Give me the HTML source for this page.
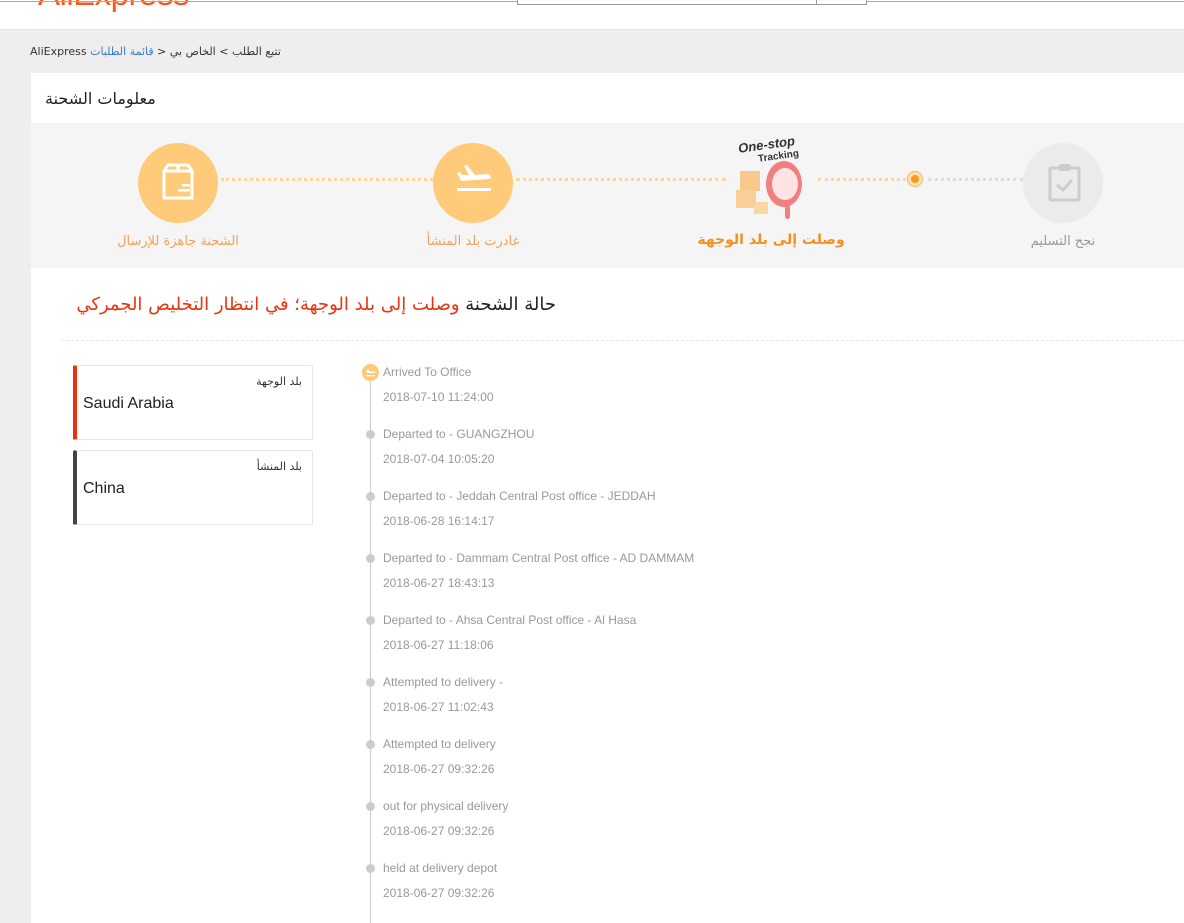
<!DOCTYPE html>
<html><head><meta charset="utf-8"><style>
*{margin:0;padding:0;box-sizing:border-box}
body{width:1184px;height:923px;overflow:hidden;background:#eee;font-family:"Liberation Sans","DejaVu Sans",sans-serif;position:relative}
.abs{position:absolute}
.ar{font-family:"DejaVu Sans","Liberation Sans",sans-serif}
#hdr{left:0;top:0;width:1184px;height:30px;background:#fff;border-bottom:1px solid #e3e3e3;overflow:hidden}
#panel{left:31px;top:73px;width:1153px;height:850px;background:#fff}
.step{position:absolute;width:80px;height:80px;border-radius:50%;background:#ffcb7a}
.lbl{position:absolute;font-size:13px;color:#f5a05a;text-align:center;width:200px;direction:rtl}
.dots{position:absolute;height:0;border-top:3px dotted #ffd699}
.ti{position:absolute;left:383px;font-size:12px;color:#999}
.dot{position:absolute;left:366px;width:9px;height:9px;border-radius:50%;background:#ccc}
.bc span{display:inline-block;unicode-bidi:isolate}
</style></head><body>
<div id="hdr" class="abs">
  <div class="abs" style="left:38px;top:-25px;font-size:33px;color:#f25a1a;letter-spacing:-0.5px">AliExpress</div>
  <div class="abs" style="left:517px;top:-2px;width:350px;height:7px;border:1px solid #999;border-top:none"></div>
  <div class="abs" style="left:816px;top:0;width:1px;height:5px;background:#999"></div>
  <div class="abs" style="left:866px;top:1px;width:318px;height:1px;background:#aaa"></div>
  <div class="abs" style="left:0;top:1px;width:517px;height:1px;background:#aaa"></div>
</div>
<div class="abs ar bc" style="left:30px;top:45px;font-size:11px;color:#333;white-space:nowrap;direction:ltr"><span>AliExpress</span> <span style="color:#3a7bc8">قائمة الطلبات</span> <span>&gt;</span> <span>الخاص بي</span> <span>&lt;</span> <span>تتبع الطلب</span></div>
<div id="panel" class="abs">
  <div class="abs ar" style="left:14px;top:16px;font-size:16px;color:#222">معلومات الشحنة</div>
  <div class="abs" style="left:0;top:50px;width:1153px;height:145px;background:#f5f5f5">
    <div class="dots" style="left:190px;top:55px;width:212px"></div>
    <div class="dots" style="left:485px;top:55px;width:210px"></div>
    <div class="dots" style="left:787px;top:55px;width:95px"></div>
    <div class="dots" style="left:897px;top:55px;width:95px;border-top-color:#ddd"></div>
    <div class="step" style="left:107px;top:20px">
      <svg width="80" height="80" viewBox="0 0 80 80"><g fill="none" stroke="#fff" stroke-width="3"><path d="M26 28 L30 22 H50 L54 28 V55 H26 Z M26 28 H54 M40 22 V28"/></g><rect x="44" y="41" width="8" height="2.5" fill="#fff"/><rect x="40" y="46" width="12" height="2.5" fill="#fff"/></svg>
    </div>
    <div class="step" style="left:402px;top:20px">
      <svg width="80" height="80" viewBox="0 0 80 80"><path d="M24 30 L28 38 L56 36 Q60 34 55 31 L42 32 L34 22 L31 23 L36 32 L29 32 L27 29 Z" fill="#fff"/><rect x="24" y="45" width="34" height="3" fill="#fff"/></svg>
    </div>
    <div class="abs" style="left:705px;top:12px;width:80px;height:85px">
      <div class="abs" style="left:2px;top:2px;font-size:13px;font-weight:bold;color:#333;transform:rotate(-8deg);font-style:italic">One-stop</div>
      <div class="abs" style="left:22px;top:16px;font-size:10px;font-weight:bold;color:#333;transform:rotate(-8deg)">Tracking</div>
      <div class="abs" style="left:4px;top:36px;width:20px;height:20px;background:#f7c98c"></div>
      <div class="abs" style="left:0;top:55px;width:20px;height:18px;background:#f9cf95"></div>
      <div class="abs" style="left:18px;top:67px;width:14px;height:12px;background:#f9d7a5"></div>
      <div class="abs" style="left:30px;top:26px;width:36px;height:46px;border-radius:50%;background:#f08080"></div>
      <div class="abs" style="left:36px;top:33px;width:26px;height:32px;border-radius:50%;background:#fde3e3"></div>
      <div class="abs" style="left:49px;top:70px;width:5px;height:14px;border-radius:3px;background:#f08080"></div>
    </div>
    <div class="abs" style="left:876px;top:48px;width:16px;height:16px;border-radius:50%;background:#ffe0b0;border:1px solid #f5b760"></div>
    <div class="abs" style="left:880px;top:52px;width:8px;height:8px;border-radius:50%;background:#f59b1c"></div>
    <div class="step" style="left:992px;top:20px;background:#ebebeb">
      <svg width="80" height="80" viewBox="0 0 80 80"><g fill="none" stroke="#ccc" stroke-width="3"><rect x="27" y="25" width="29" height="32" rx="1"/><path d="M34 42 L40 47 L49 37"/></g><rect x="35" y="21" width="13" height="7" rx="3" fill="#ccc"/></svg>
    </div>
    <div class="lbl ar" style="left:47px;top:111px">الشحنة جاهزة للإرسال</div>
    <div class="lbl ar" style="left:342px;top:111px">غادرت بلد المنشأ</div>
    <div class="lbl ar" style="left:640px;top:109px;color:#f5901e;font-weight:bold;font-size:14px">وصلت إلى بلد الوجهة</div>
    <div class="lbl ar" style="left:932px;top:111px;color:#999">نجح التسليم</div>
  </div>
  <div class="abs ar" style="left:0px;top:221px;font-size:18px;color:#e8330e;direction:rtl;width:525px;text-align:right;white-space:nowrap"><span style="color:#222">حالة الشحنة</span> وصلت إلى بلد الوجهة؛ في انتظار التخليص الجمركي</div>
  <div class="abs" style="left:30px;top:267px;width:1123px;border-top:1px dashed #e8e8e8"></div>
</div>
<div class="abs" style="left:73px;top:365px;width:240px;height:75px;border:1px solid #e6e6e6;border-left:4px solid #e8330e;border-radius:2px">
  <div class="abs ar" style="right:10px;top:9px;font-size:11px;color:#333">بلد الوجهة</div>
  <div class="abs" style="left:6px;top:29px;font-size:16px;color:#222">Saudi Arabia</div>
</div>
<div class="abs" style="left:73px;top:450px;width:240px;height:75px;border:1px solid #e6e6e6;border-left:4px solid #444;border-radius:2px">
  <div class="abs ar" style="right:10px;top:9px;font-size:11px;color:#333">بلد المنشأ</div>
  <div class="abs" style="left:6px;top:29px;font-size:16px;color:#222">China</div>
</div>
<div class="abs" style="left:370px;top:372px;width:1px;height:551px;background:#ccc"></div>
<div class="abs" style="left:362px;top:364px;width:17px;height:17px;border-radius:50%;background:#ffc878">
  <svg width="17" height="17" viewBox="0 0 17 17"><path d="M4 6 L5 9 L13 9 Q14 8 12 7.5 L8 7.5 L6 5 L5 5 L6 7.5 Z" fill="#fff"/><rect x="4" y="11" width="9" height="1.3" fill="#fff"/></svg>
</div>
<div class="ti" style="top:365px">Arrived To Office</div><div class="ti" style="top:390px">2018-07-10 11:24:00</div>
<div class="dot" style="top:430px"></div><div class="ti" style="top:427px">Departed to - GUANGZHOU</div><div class="ti" style="top:452px">2018-07-04 10:05:20</div>
<div class="dot" style="top:492px"></div><div class="ti" style="top:489px">Departed to - Jeddah Central Post office - JEDDAH</div><div class="ti" style="top:514px">2018-06-28 16:14:17</div>
<div class="dot" style="top:554px"></div><div class="ti" style="top:551px">Departed to - Dammam Central Post office - AD DAMMAM</div><div class="ti" style="top:576px">2018-06-27 18:43:13</div>
<div class="dot" style="top:616px"></div><div class="ti" style="top:613px">Departed to - Ahsa Central Post office - Al Hasa</div><div class="ti" style="top:638px">2018-06-27 11:18:06</div>
<div class="dot" style="top:678px"></div><div class="ti" style="top:675px">Attempted to delivery -</div><div class="ti" style="top:700px">2018-06-27 11:02:43</div>
<div class="dot" style="top:740px"></div><div class="ti" style="top:737px">Attempted to delivery</div><div class="ti" style="top:762px">2018-06-27 09:32:26</div>
<div class="dot" style="top:802px"></div><div class="ti" style="top:799px">out for physical delivery</div><div class="ti" style="top:824px">2018-06-27 09:32:26</div>
<div class="dot" style="top:864px"></div><div class="ti" style="top:861px">held at delivery depot</div><div class="ti" style="top:886px">2018-06-27 09:32:26</div>
</body></html>
